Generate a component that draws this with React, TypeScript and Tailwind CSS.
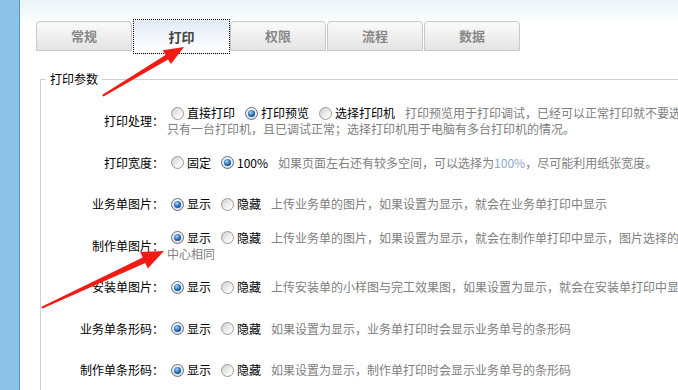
import React from 'react';

const font = { fontFamily: '"Noto Sans CJK SC", "Noto Sans", sans-serif' };

function Radio({ checked }: { checked?: boolean }) {
    if (checked) {
        return (
            <span className="w-[13px] h-[13px] shrink-0 rounded-full border border-[#5f6f80] bg-[linear-gradient(to_bottom,#f4f4f4,#d9dde2)] flex items-center justify-center">
                <span className="w-[7px] h-[7px] rounded-full bg-[radial-gradient(circle_at_40%_35%,#a8d8ff,#1d63ad_55%,#0b3d7a)]"></span>
            </span>
        );
    }
    return (
        <span className="w-[13px] h-[13px] shrink-0 rounded-full border border-[#9a9a9a] bg-[linear-gradient(135deg,#cfcfcf,#f7f7f7_70%,#ffffff)]"></span>
    );
}

function Option({ label, checked, first }: { label: string; checked?: boolean; first?: boolean }) {
    return (
        <span className={first ? "flex items-center ml-[4px]" : "flex items-center ml-[10px]"}>
            <Radio checked={checked} />
            <span className="ml-[3px] text-black">{label}</span>
        </span>
    );
}

const tabs = ['常规', '打印', '权限', '流程', '数据'];

export default function App() {
    const rowH = ['h-[42px]', 'h-[41px]', 'h-[42px]', 'h-[41px]', 'h-[42px]', 'h-[41px]', 'h-[42px]'];

    const rows = [
        {
            label: '打印处理：',
            options: [['直接打印', false], ['打印预览', true], ['选择打印机', false]] as [string, boolean][],
            desc: '打印预览用于打印调试，已经可以正常打印就不要选择打印预览',
            more: '只有一台打印机，且已调试正常；选择打印机用于电脑有多台打印机的情况。',
        },
        {
            label: '打印宽度：',
            options: [['固定', false], ['100%', true]] as [string, boolean][],
            desc: 'width',
        },
        {
            label: '业务单图片：',
            options: [['显示', true], ['隐藏', false]] as [string, boolean][],
            desc: '上传业务单的图片，如果设置为显示，就会在业务单打印中显示',
        },
        {
            label: '制作单图片：',
            options: [['显示', true], ['隐藏', false]] as [string, boolean][],
            desc: '上传业务单的图片，如果设置为显示，就会在制作单打印中显示，图片选择的位置与',
            more: '中心相同',
        },
        {
            label: '安装单图片：',
            options: [['显示', true], ['隐藏', false]] as [string, boolean][],
            desc: '上传安装单的小样图与完工效果图，如果设置为显示，就会在安装单打印中显示',
        },
        {
            label: '业务单条形码：',
            options: [['显示', true], ['隐藏', false]] as [string, boolean][],
            desc: '如果设置为显示，业务单打印时会显示业务单号的条形码',
        },
        {
            label: '制作单条形码：',
            options: [['显示', true], ['隐藏', false]] as [string, boolean][],
            desc: '如果设置为显示，制作单打印时会显示业务单号的条形码',
        },
    ];

    return (
        <div style={font} className="relative w-[678px] h-[390px] overflow-hidden flex text-[12px] leading-[16px] bg-white">
            {/* left frame strip */}
            <div className="w-[20px] shrink-0 bg-[#8cc3e6] border-r border-[#4f93d2]"></div>

            <div className="flex-1 bg-[linear-gradient(to_bottom,#e9f4fa,#ffffff_24px)]">
                {/* tabs */}
                <div className="flex items-start pt-[19px] pl-[16px]">
                    {tabs.map((t, i) =>
                        i === 1 ? (
                            <div key={t} className="w-[97px] h-[35px] ml-[1px] border border-dotted border-black bg-[linear-gradient(to_bottom,#e3ecf8,#ffffff)] flex items-center justify-center font-bold text-[#444] text-[13px]">
                                {t}
                            </div>
                        ) : (
                            <div key={t} className={"w-[96px] h-[30px] mt-[2px] rounded-t-[4px] border border-[#c9c9c9] bg-[linear-gradient(to_bottom,#fafafa,#e4e4e4)] flex items-center justify-center font-bold text-[#888] text-[13px] " + (i === 0 ? "" : i === 2 ? "ml-0" : "ml-[1px]")}>
                                {t}
                            </div>
                        )
                    )}
                </div>

                {/* fieldset */}
                <fieldset className="mt-[17px] ml-[20px] w-[720px] border border-[#d0d0d0] pl-[5px] pt-[13px] pb-[40px]">
                    <legend className="px-[4px] text-black">打印参数</legend>
                    {rows.map((r, i) => (
                        <div key={r.label} className={"flex items-center " + rowH[i]}>
                            <div className="w-[118px] shrink-0 text-right text-black">{r.label}</div>
                            <div className="ml-[3px] flex flex-col whitespace-nowrap">
                                <div className="flex items-center">
                                    {r.options.map(([o, c], j) => (
                                        <Option key={o} label={o} checked={c} first={j === 0} />
                                    ))}
                                    {r.desc === 'width' ? (
                                        <span className="ml-[10px] text-[#808080]">
                                            如果页面左右还有较多空间，可以选择为<span className="text-[#8aa9c9]">100%</span>，尽可能利用纸张宽度。
                                        </span>
                                    ) : (
                                        <span className="ml-[10px] text-[#808080]">{r.desc}</span>
                                    )}
                                </div>
                                {r.more && <div className="text-[#808080]">{r.more}</div>}
                            </div>
                        </div>
                    ))}
                </fieldset>
            </div>

            {/* red annotation arrows */}
            <svg className="absolute left-0 top-0 pointer-events-none" width="678" height="390">
                <polygon fill="#f21b13" points="102,95 165.5,55 162.7,50.3 184,47 170.9,64.1 168.1,59.4 103.5,96.5" />
                <polygon fill="#f21b13" points="41,307 142.7,257.5 140.2,252 164,251 147.8,268.4 145.3,262.9 42.5,308.5" />
            </svg>
        </div>
    );
}
